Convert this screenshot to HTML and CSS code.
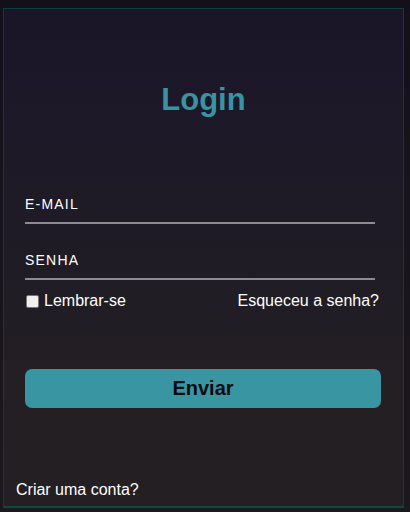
FILE: index.html
```html
<!DOCTYPE html>
<html lang="pt">
<head>
<meta charset="utf-8">
<link rel="stylesheet" href="styles.css">
<title>Login</title>
</head>
<body>
<div class="card">
  <h1 class="title">Login</h1>
  <form class="form">
    <div class="field"><label class="label">E-MAIL</label></div>
    <div class="field field-pass"><label class="label">SENHA</label></div>
    <div class="options">
      <label class="remember"><span class="box"></span>Lembrar-se</label>
      <span class="forgot">Esqueceu a senha?</span>
    </div>
    <button type="button" class="submit">Enviar</button>
  </form>
  <div class="signup">Criar uma conta?</div>
</div>
</body>
</html>
```
FILE: styles.css
```css
html, body { margin: 0; height: 100%; }
body {
  background: linear-gradient(180deg, #13101c 0%, #1b191c 100%);
  font-family: "Liberation Sans", Arial, sans-serif;
  color: #fff;
  padding: 8px 6px 4px 3px;
  box-sizing: border-box;
}
.card {
  box-sizing: border-box;
  width: 401px;
  height: 500px;
  border: 1px solid #0f3c3c;
  border-bottom: 2px solid #0e4a44;
  background: linear-gradient(180deg, #1a1629 0%, #1f1b26 45%, #231f23 75%, #231f22 100%);
  display: flex;
  flex-direction: column;
  padding: 0 0 0 12px;
}
.title {
  margin: 73px 0 0 0;
  text-align: center;
  font-size: 31px;
  font-weight: bold;
  color: #3993a2;
  line-height: 36px;
  padding-right: 12px;
}
.form {
  display: flex;
  flex-direction: column;
  padding-left: 9px;
  margin-top: 76px;
}
.field {
  width: 350px;
  border-bottom: 2px solid #8c8b90;
  height: 28px;
  box-sizing: content-box;
}
.field-pass { margin-top: 26px; }
.label {
  display: block;
  font-size: 14px;
  letter-spacing: 1.2px;
  line-height: 16px;
  margin-top: 2px;
}
.options {
  display: flex;
  justify-content: space-between;
  align-items: center;
  width: 354px;
  margin-top: 12px;
  font-size: 16px;
  line-height: 18px;
}
.remember { display: flex; align-items: center; }
.box {
  width: 11px;
  height: 11px;
  background: #f0f0f0;
  border: 1px solid #767676;
  border-radius: 2px;
  margin: 0 5px 0 1px;
}
.submit {
  margin-top: 59px;
  width: 356px;
  height: 39px;
  border: none;
  border-radius: 7px;
  background: #3a95a3;
  color: #0b0b12;
  font-family: "Liberation Sans", Arial, sans-serif;
  font-weight: bold;
  font-size: 20px;
}
.signup {
  margin-top: auto;
  margin-bottom: 7px;
  font-size: 16px;
  line-height: 18px;
  margin-left: 0;
}
```
